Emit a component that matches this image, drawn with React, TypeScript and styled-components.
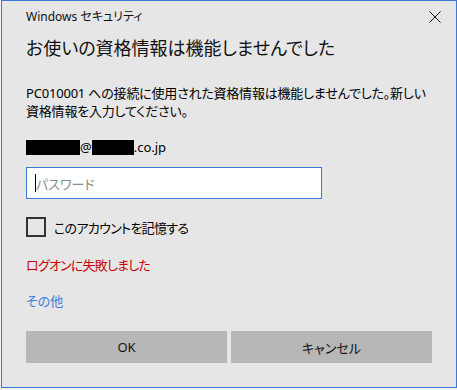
import React from "react";
import styled, { createGlobalStyle } from "styled-components";

const Global = createGlobalStyle`
  html, body { margin: 0; padding: 0; background: #f2f2f2; }
  body { font-family: "Noto Sans", "Noto Sans CJK JP", sans-serif; font-feature-settings: "palt"; }
`;

const Dialog = styled.div`
  box-sizing: border-box;
  margin-left: 1px;
  width: 456px;
  height: 388px;
  border: 1px solid #3b78d8;
  background: #e6e6e6;
  display: flex;
  flex-direction: column;
  color: #000;
`;

const TitleBar = styled.div`
  height: 32px;
  display: flex;
  align-items: center;
  justify-content: space-between;
  padding-left: 24px;
`;

const TitleText = styled.span`
  font-size: 12px;
  line-height: 16px;
  color: #111;
`;

const CloseButton = styled.div`
  width: 42px;
  height: 32px;
  display: flex;
  align-items: center;
  justify-content: center;
`;

const Content = styled.div`
  padding: 0 24px 24px 24px;
  display: flex;
  flex-direction: column;
`;

const Heading = styled.h1`
  margin: 0;
  font-weight: 400;
  font-size: 18px;
  line-height: 30px;
  color: #111;
  white-space: nowrap;
`;

const Message = styled.p`
  margin: 21px 0 0 0;
  font-size: 13px;
  line-height: 18px;
  letter-spacing: -0.2px;
  white-space: nowrap;
`;

const Email = styled.div`
  margin-top: 18px;
  font-size: 13px;
  line-height: 18px;
  display: flex;
  align-items: center;
`;

const Redact = styled.span<{ $w: number }>`
  display: inline-block;
  width: ${(p) => p.$w}px;
  height: 15px;
  background: #000;
`;

const InputBox = styled.div`
  box-sizing: border-box;
  margin-top: 11px;
  width: 296px;
  height: 32px;
  border: 1px solid #3b78d8;
  background: #fff;
  display: flex;
  align-items: center;
  padding-left: 8px;
`;

const Caret = styled.span`
  display: inline-block;
  width: 1px;
  height: 18px;
  background: #000;
`;

const Placeholder = styled.span`
  font-size: 13px;
  color: #8a8a8a;
`;

const CheckRow = styled.label`
  margin-top: 18px;
  height: 20px;
  display: flex;
  align-items: center;
  gap: 8px;
  font-size: 13px;
  letter-spacing: -0.7px;
`;

const Box = styled.span`
  box-sizing: border-box;
  width: 20px;
  height: 20px;
  border: 2px solid #333;
`;

const ErrorText = styled.div`
  margin-top: 19px;
  font-size: 13px;
  line-height: 18px;
  letter-spacing: -0.8px;
  color: #c80000;
`;

const LinkText = styled.div`
  margin-top: 18px;
  font-size: 13px;
  line-height: 18px;
  color: #3d7bd8;
`;

const Buttons = styled.div`
  margin-top: 21px;
  display: flex;
  gap: 4px;
`;

const Button = styled.div`
  width: 201px;
  height: 32px;
  background: #b7b7b7;
  display: flex;
  align-items: center;
  justify-content: center;
  font-size: 13px;
  color: #111;
`;

export default function App() {
  return (
    <>
      <Global />
      <Dialog>
        <TitleBar>
          <TitleText>Windows セキュリティ</TitleText>
          <CloseButton>
            <svg width="12" height="12" viewBox="0 0 12 12">
              <path d="M0.5 0.5 L11.5 11.5 M11.5 0.5 L0.5 11.5" stroke="#111" strokeWidth="1" />
            </svg>
          </CloseButton>
        </TitleBar>
        <Content>
          <Heading>お使いの資格情報は機能しませんでした</Heading>
          <Message>
            PC010001 への接続に使用された資格情報は機能しませんでした。新しい
            <br />
            資格情報を入力してください。
          </Message>
          <Email>
            <Redact $w={54} />
            <span>@</span>
            <Redact $w={42} />
            <span>.co.jp</span>
          </Email>
          <InputBox>
            <Caret />
            <Placeholder>パスワード</Placeholder>
          </InputBox>
          <CheckRow>
            <Box />
            <span>このアカウントを記憶する</span>
          </CheckRow>
          <ErrorText>ログオンに失敗しました</ErrorText>
          <LinkText>その他</LinkText>
          <Buttons>
            <Button>OK</Button>
            <Button>キャンセル</Button>
          </Buttons>
        </Content>
      </Dialog>
    </>
  );
}
